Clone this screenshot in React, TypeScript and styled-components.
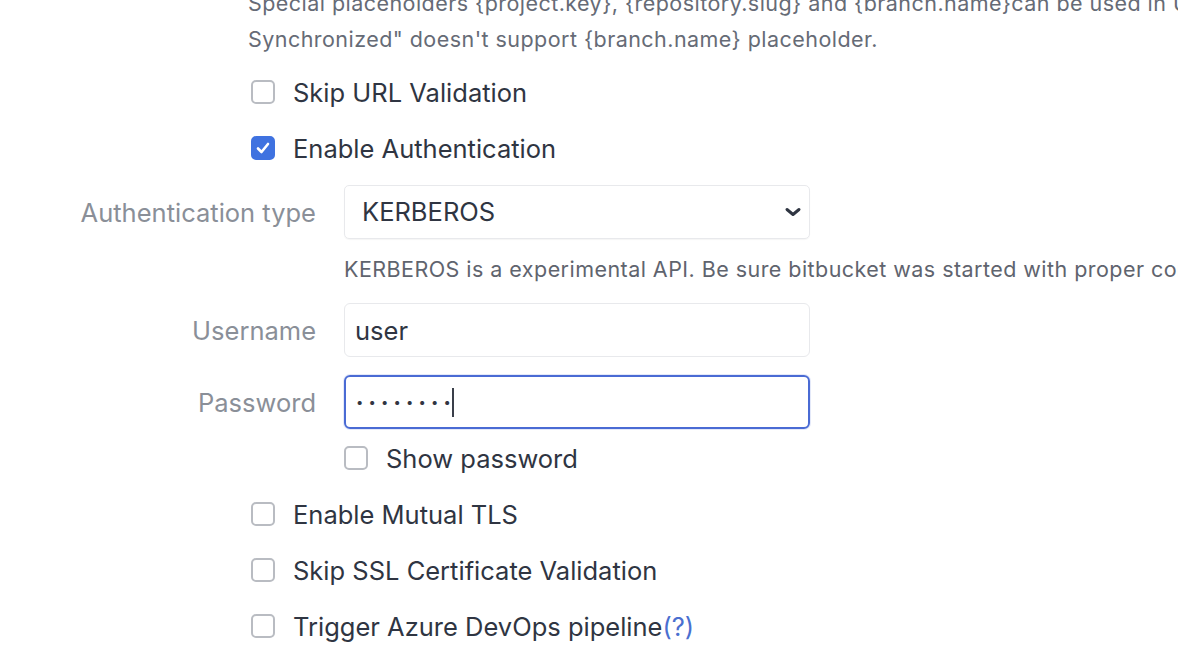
import React from "react";
import styled, { createGlobalStyle } from "styled-components";

const GlobalStyle = createGlobalStyle`
  html, body {
    margin: 0;
    padding: 0;
    background: #ffffff;
    overflow: hidden;
  }
  body {
    font-family: "Inter", "Noto Sans", "Liberation Sans", sans-serif;
    color: #2f3542;
  }
`;

const Page = styled.div`
  width: 1178px;
  height: 660px;
  overflow: hidden;
  white-space: nowrap;
`;

const Description = styled.p`
  margin: -15px 0 0 0;
  padding-left: 248px;
  font-size: 21.5px;
  letter-spacing: 0.45px;
  line-height: 36px;
  color: #666b76;
`;

const CheckRow = styled.label<{ $indent: number; $mt?: number }>`
  display: flex;
  align-items: center;
  gap: 18px;
  height: 56px;
  margin-top: ${(p) => p.$mt ?? 0}px;
  padding-left: ${(p) => p.$indent}px;
  font-size: 25.5px;
  color: #2f3542;
`;

const Box = styled.span<{ $checked?: boolean }>`
  box-sizing: border-box;
  width: 24px;
  height: 24px;
  flex: none;
  border-radius: 5px;
  display: flex;
  align-items: center;
  justify-content: center;
  background: ${(p) => (p.$checked ? "#3f72e0" : "#ffffff")};
  border: 2px solid ${(p) => (p.$checked ? "#3f72e0" : "#b9bcc2")};
`;

const FieldRow = styled.div<{ $mt?: number }>`
  display: grid;
  grid-template-columns: 316px 466px;
  column-gap: 28px;
  align-items: center;
  margin-top: ${(p) => p.$mt ?? 0}px;
`;

const Label = styled.span`
  text-align: right;
  font-size: 25.5px;
  color: #8a8f98;
`;

const SelectBox = styled.div`
  box-sizing: border-box;
  height: 54px;
  border: 1.5px solid #e8e9ec;
  border-radius: 5px;
  display: flex;
  align-items: center;
  justify-content: space-between;
  padding: 0 6px 1px 17px;
  font-size: 25.5px;
  color: #2f3542;
  box-shadow: 0 1px 1px rgba(0, 0, 0, 0.04);
`;

const Help = styled.span`
  grid-column: 2;
  font-size: 21.5px;
  letter-spacing: 0.45px;
  line-height: 36px;
  color: #5f646e;
`;

const TextInput = styled.div<{ $focused?: boolean }>`
  box-sizing: border-box;
  height: 54px;
  border: ${(p) => (p.$focused ? "2.5px solid #4a6bd4" : "1.5px solid #e8e9ec")};
  border-radius: 6px;
  display: flex;
  align-items: center;
  padding: 0 10px;
  font-size: 25.5px;
  color: #2f3542;
  box-shadow: ${(p) => (p.$focused ? "0 0 0 1px rgba(74,107,212,0.15)" : "none")};
`;

const Dots = styled.span`
  font-size: 13px;
  letter-spacing: 5.2px;
  color: #2f3542;
`;

const Caret = styled.span`
  display: inline-block;
  width: 2px;
  height: 29px;
  background: #3a3f4a;
  margin-left: -4px;
`;

const SubCheck = styled.label`
  grid-column: 2;
  display: flex;
  align-items: center;
  gap: 18px;
  height: 56px;
  margin-top: 1px;
  font-size: 25.5px;
  color: #2f3542;
`;

const HelpLink = styled.a`
  color: #4a6fd0;
  text-decoration: none;
`;

const Check = () => (
  <svg width="16" height="16" viewBox="0 0 16 16">
    <path d="M3 8.5 L6.5 12 L13 4" fill="none" stroke="#fff" strokeWidth="2.6" strokeLinecap="round" strokeLinejoin="round" />
  </svg>
);

const Chevron = () => (
  <svg width="20" height="20" viewBox="0 0 20 20">
    <path d="M4 7.5 L10 12.5 L16 7.5" fill="none" stroke="#2f3542" strokeWidth="3" strokeLinecap="round" strokeLinejoin="round" />
  </svg>
);

export default function App() {
  return (
    <Page>
      <GlobalStyle />
      <Description>
        Special placeholders {"{project.key}"}, {"{repository.slug}"} and {"{branch.name}"}can be used in URL. Event "Repository
        <br />
        Synchronized" doesn't support {"{branch.name}"} placeholder.
      </Description>
      <CheckRow $indent={251} $mt={7}>
        <Box />
        Skip URL Validation
      </CheckRow>
      <CheckRow $indent={251}>
        <Box $checked>
          <Check />
        </Box>
        Enable Authentication
      </CheckRow>
      <FieldRow $mt={9}>
        <Label>Authentication type</Label>
        <SelectBox>
          KERBEROS
          <Chevron />
        </SelectBox>
      </FieldRow>
      <FieldRow $mt={12}>
        <Help>KERBEROS is a experimental API. Be sure bitbucket was started with proper configuration.</Help>
      </FieldRow>
      <FieldRow $mt={16}>
        <Label>Username</Label>
        <TextInput>user</TextInput>
      </FieldRow>
      <FieldRow $mt={18}>
        <Label>Password</Label>
        <TextInput $focused>
          <Dots>••••••••</Dots>
          <Caret />
        </TextInput>
      </FieldRow>
      <FieldRow>
        <SubCheck>
          <Box />
          Show password
        </SubCheck>
      </FieldRow>
      <CheckRow $indent={251}>
        <Box />
        Enable Mutual TLS
      </CheckRow>
      <CheckRow $indent={251}>
        <Box />
        Skip SSL Certificate Validation
      </CheckRow>
      <CheckRow $indent={251}>
        <Box />
        <span>
          Trigger Azure DevOps pipeline<HelpLink href="#">(?)</HelpLink>
        </span>
      </CheckRow>
    </Page>
  );
}
